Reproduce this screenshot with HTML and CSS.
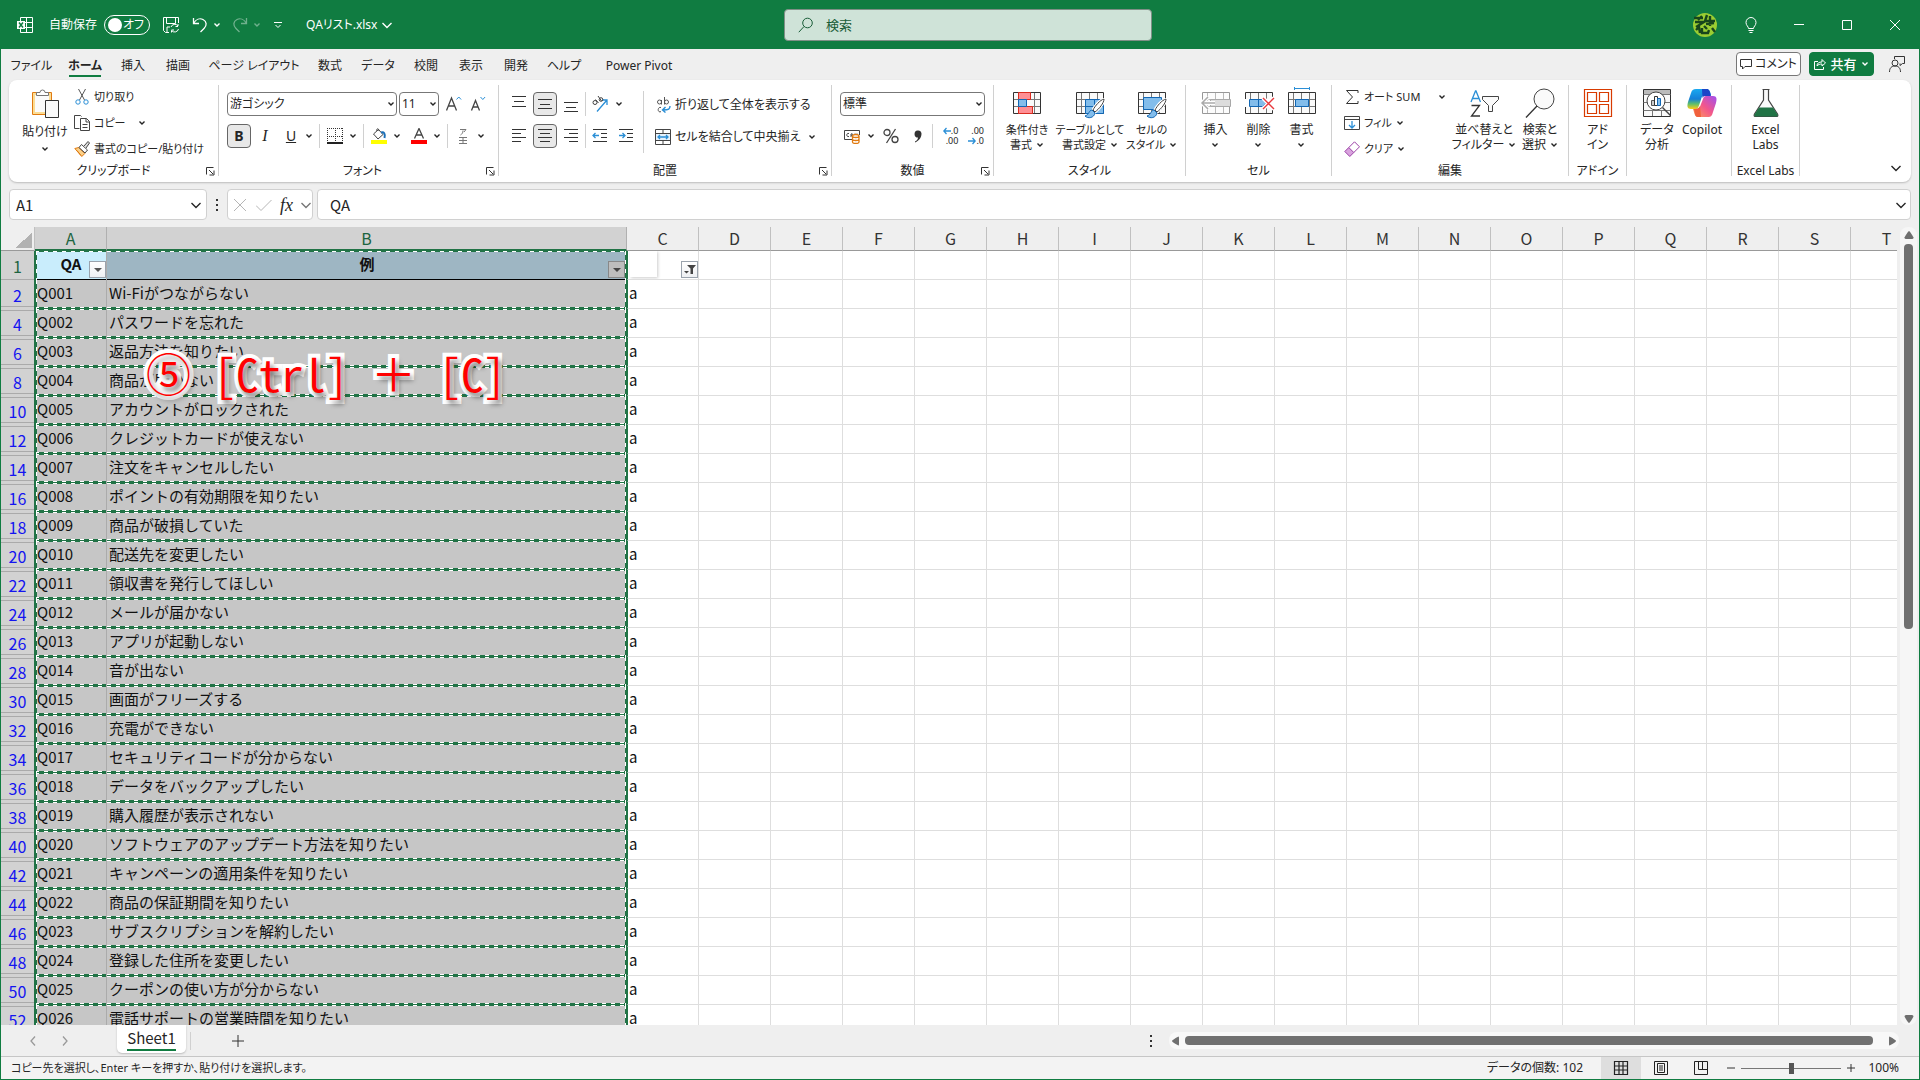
FILE: index.html
```html
<!DOCTYPE html>
<html lang="ja">
<head>
<meta charset="utf-8">
<title>QAリスト.xlsx - Excel</title>
<link rel="stylesheet" href="styles.css">
</head>
<body>
<svg class="defs" aria-hidden="true">
  <symbol id="chev" viewBox="0 0 8 8"><path d="M1.500 2.500 4 5l2.500-2.500" fill="none" stroke="currentColor" stroke-width="1.400"/></symbol>
  <symbol id="chev-lg" viewBox="0 0 12 12"><path d="M1.500 4 6 8.500 10.500 4" fill="none" stroke="currentColor" stroke-width="1.400"/></symbol>
  <symbol id="launch" viewBox="0 0 9 9"><path d="M.5 7.500V.5h7M3 3l4 4M8 3.500V8H3.500" fill="none" stroke="#333"/></symbol>
  <symbol id="table" viewBox="0 0 30 30"><path d="M1.500 4.500h27v21h-27z" fill="#fafafa"/><path d="M6.500 5v20M14.500 5v20M22.500 5v20M2 11.500h26M2 18.500h26" stroke="#777" fill="none"/><path d="M1.500 4.500h27v21h-27z" fill="none" stroke="#333"/></symbol>
  <symbol id="brush" viewBox="0 0 22 22"><path d="M20 1c-4 1-9 7-11 11l2 2c4-3 9-9 9-13z" fill="#fff" stroke="#fff" stroke-width="3"/><path d="M20 1c-4 1-9 7-11 11l2 2c4-3 9-9 9-13z" fill="#fff" stroke="#444"/><path d="M8 12c-3 0-3 5-7 6 3 3 9 2 10-3z" fill="#83bdeb" stroke="#1267b4"/></symbol>
</svg>
<div class="window">
<header class="titlebar">
  <div class="title-left">
    <svg class="i16" viewBox="0 0 16 16"><path d="M3.500 4V.5h12v15h-12V12M7 5.500h8.500M7 10.500h8.500M9.500.5v15" fill="none" stroke="#fff"/><path d="M0 4h8v8H0z" fill="#fff"/><path d="m2 5.500 4 5m0-5-4 5" stroke="#107c41" stroke-width="1.500"/></svg>
    <span class="autosave">自動保存</span>
    <button class="toggle" aria-label="自動保存"><i></i>オフ</button>
    <button class="tb save" aria-label="保存"><svg class="i16" viewBox="0 0 16 16" fill="none" stroke="#fff"><path d="M6 15.500H2.500l-2-2V.5h15V6M3.500.5v6h9v-6M4 15v-5h3M8 10a4 4 0 0 1 7-1v-2m0 2.500h-2.500M15.500 12a4 4 0 0 1-7 1.500v2m0-2.500H11"/></svg></button>
    <button class="tb" aria-label="元に戻す"><svg class="i16" viewBox="0 0 16 16" fill="none" stroke="#fff" stroke-width="1.300"><path d="M1.500 1v5.500H7M1.500 6.500C4 2 8 1 11 2.500c4 2 4 6 1 9L8.500 15"/></svg></button>
    <svg class="c8" aria-hidden="true"><use href="#chev"/></svg>
    <button class="tb dim" aria-label="やり直し"><svg class="i16" viewBox="0 0 16 16" fill="none" stroke="#fff" stroke-width="1.300"><path d="M14.500 1v5.500H9M14.500 6.500C12 2 8 1 5 2.500c-4 2-4 6-1 9L7.500 15"/></svg></button>
    <svg class="c8 dim" aria-hidden="true"><use href="#chev"/></svg>
    <button class="tb custom" aria-label="クイック アクセス"><svg class="c8" viewBox="0 0 8 8" fill="none" stroke="#fff"><path d="M0 1.500h8M1.500 4 4 6.500 6.500 4"/></svg></button>
    <button class="filename">QAリスト.xlsx<svg class="c12"><use href="#chev-lg"/></svg></button>
  </div>
  <label class="search"><svg class="i16" viewBox="0 0 16 16" fill="none" stroke="#185c37"><circle cx="9.500" cy="6" r="4.800"/><path d="M6 9.500.8 15.200"/></svg><input type="text" placeholder="検索"></label>
  <div class="title-right">
    <svg class="avatar" viewBox="0 0 24 24"><circle cx="12" cy="12" r="12" fill="#9acd32"/><path d="M1 5h9M2 9h9l-8 5M9 3l-4 4M14 2l-2 6h10M13 11l8-1M17 3v10M3 17l3-3 1 6M9 15v5h6l1-3M19 15l3 4M11 13l3 3" fill="none" stroke="#17451c" stroke-width="2.400"/></svg>
    <button class="wb" aria-label="ヒント"><svg class="i16" viewBox="0 0 16 16" fill="none" stroke="#fff"><path d="M5.500 11.500c0-2-2.500-3-2.500-6a5 5 0 0 1 10 0c0 3-2.500 4-2.500 6zM5.500 13.500h5M6.500 15.500h3"/></svg></button>
    <button class="wb" aria-label="最小化"><svg class="i16" viewBox="0 0 16 16"><path d="M3 7.500h10" stroke="#fff"/></svg></button>
    <button class="wb" aria-label="最大化"><svg class="i16" viewBox="0 0 16 16"><path d="M3.500 3.500h9v9h-9z" fill="none" stroke="#fff"/></svg></button>
    <button class="wb" aria-label="閉じる"><svg class="i16" viewBox="0 0 16 16"><path d="m3 3 10 10m0-10L3 13" stroke="#fff"/></svg></button>
  </div>
</header>

<div class="tabbar">
  <nav class="tabs">
    <a href="#">ファイル</a><a href="#" class="on">ホーム</a><a href="#">挿入</a><a href="#">描画</a><a href="#">ページ レイアウト</a><a href="#">数式</a><a href="#">データ</a><a href="#">校閲</a><a href="#">表示</a><a href="#">開発</a><a href="#">ヘルプ</a><a href="#">Power Pivot</a>
  </nav>
  <div class="tab-actions">
    <button class="comment"><svg class="c12" viewBox="0 0 12 12"><path d="M.5 1.500h11v7H5L2.500 11V8.500h-2z" fill="none" stroke="#333"/></svg>コメント</button>
    <button class="share"><svg class="c12" viewBox="0 0 12 12" fill="none" stroke="#fff"><path d="M4 3.500H.5v8h9V9M3 8c0-3 2-4 5-4V1.500L11.500 5 8 8V6C6 6 4 6.500 3 8z"/></svg>共有<svg class="c8"><use href="#chev"/></svg></button>
    <button class="catchup" aria-label="更新"><svg class="i16" viewBox="0 0 16 16" fill="none" stroke="#333"><path d="M5.500 3V.5h10v7h-2l-2.500 2V7.500"/><circle cx="6" cy="7" r="3"/><path d="M.5 16c0-4 2-6 5.500-6s5.500 2 5.500 6"/></svg></button>
  </div>
</div>

<section class="ribbon">
  <div class="group g-clip">
    <div class="body">
      <button class="big paste"><svg class="i30" viewBox="0 0 30 30"><path d="M2.500 4.500h19v22h-19z" fill="#fff" stroke="#e07a10"/><path d="M4 6h16v19H4z" fill="#fbfbfb" stroke="#fbdc94" stroke-width="2"/><path d="M6.500 7.500v-3h3.500a2.500 2.500 0 0 1 5 0h3.500v3z" fill="#fff" stroke="#777"/><path d="M15.500 12.500h13v17h-13z" fill="#fafafa" stroke="#333"/></svg><span>貼り付け</span><svg class="c8"><use href="#chev"/></svg></button>
      <div class="list">
        <button><svg class="i16" viewBox="0 0 16 16" fill="none"><path d="m4.500 0 6 11M11.500 0l-6 11" stroke="#555"/><circle cx="4" cy="13" r="2.200" stroke="#2b8fd6"/><circle cx="12" cy="13" r="2.200" stroke="#2b8fd6"/></svg>切り取り</button>
        <button><svg class="i16" viewBox="0 0 16 16" fill="none" stroke="#444"><path d="M5.500 13.500h-5V.5h6l1 1"/><path d="M6.500 3.500h6l3 3v9h-9zM12 3.500V7h3.500M8.500 9.500h5M8.500 12.500h5"/></svg>コピー<svg class="c8 push"><use href="#chev"/></svg></button>
        <button><svg class="i16" viewBox="0 0 16 16"><path d="m.8 7.500 4-1 6 6-3 3z" fill="#fbd18a" stroke="#e07a10"/><path d="m5 6.500 2.500-3 6 5.500-2.500 3z" fill="#fff" stroke="#444"/><path d="m10 5 4-4.500L15.500 2 12 7" fill="#ddd" stroke="#444"/><path d="m3 9.500 4 5" stroke="#e07a10"/></svg>書式のコピー/貼り付け</button>
      </div>
    </div>
    <footer>クリップボード<button aria-label="詳細"><svg class="c9"><use href="#launch"/></svg></button></footer>
  </div>

  <div class="group g-font">
    <div class="body stack">
      <div class="row">
        <span class="combo wide"><select aria-label="フォント"><option>游ゴシック</option></select><svg class="c8"><use href="#chev"/></svg></span>
        <span class="combo"><select aria-label="サイズ"><option>11</option></select><svg class="c8"><use href="#chev"/></svg></span>
        <button class="t" aria-label="拡大"><svg class="i16" viewBox="0 0 16 16" fill="none"><path d="M.5 14.500 5.500 2l5 12.500M2.500 10h6.500" stroke="#444" stroke-width="1.300"/><path d="m10.500 3.500 2.300-2.500 2.300 2.500" stroke="#2b8fd6"/></svg></button>
        <button class="t" aria-label="縮小"><svg class="i16" viewBox="0 0 16 16" fill="none"><path d="m1.500 14.500 4-10 4 10M3 11h5" stroke="#444" stroke-width="1.300"/><path d="m10.500 1 2.300 2.500L15.100 1" stroke="#2b8fd6"/></svg></button>
      </div>
      <div class="row">
        <button class="t on bold">B</button><button class="t ital">I</button><button class="t under">U</button><button class="d" aria-label="下線"><svg class="c8"><use href="#chev"/></svg></button>
        <i class="sep"></i>
        <button class="t" aria-label="罫線"><svg class="i16" viewBox="0 0 16 16"><path d="M0 .5h16M.5 0v15M15.500 0v15M8.500 0v15M0 8.500h16" stroke="#333" stroke-dasharray="1 1"/><path d="M0 15h16" stroke="#222" stroke-width="2"/></svg></button><button class="d" aria-label="罫線の種類"><svg class="c8"><use href="#chev"/></svg></button>
        <i class="sep"></i>
        <button class="t" aria-label="塗りつぶし"><svg class="i16" viewBox="0 0 16 16"><path d="m2.500 6 5-4.500 4.500 5-5 4.500z" fill="#fff" stroke="#444"/><path d="M6 3c-1-3 2-3 2 0" fill="none" stroke="#444"/><path d="M10 4.500c3-1 4.500 1 3.500 5.500" fill="none" stroke="#1b6fb8" stroke-width="2"/><path d="M0 12h16v4H0z" fill="#ff0"/></svg></button><button class="d" aria-label="色"><svg class="c8"><use href="#chev"/></svg></button>
        <button class="t gap" aria-label="文字色"><svg class="i16" viewBox="0 0 16 16"><path d="m3.500 10.500 4.500-10 4.500 10M5 7h6" fill="none" stroke="#444" stroke-width="1.300"/><path d="M0 12h16v4H0z" fill="red"/></svg></button><button class="d" aria-label="文字色の選択"><svg class="c8"><use href="#chev"/></svg></button>
        <i class="sep"></i>
        <button class="t" aria-label="ふりがな"><svg class="i16" viewBox="0 0 16 16" fill="none" stroke="#777"><path d="M5 1.500h6L9 4M8 2.500C8 5 7 6 5.500 7M4 9.500h8M4 12.500h8M4 15.500h8M8 9v6"/></svg></button><button class="d" aria-label="ふりがなの設定"><svg class="c8"><use href="#chev"/></svg></button>
      </div>
    </div>
    <footer>フォント<button aria-label="詳細"><svg class="c9"><use href="#launch"/></svg></button></footer>
  </div>

  <div class="group g-align">
    <div class="body">
      <div class="stack">
        <div class="row r26">
          <button class="t" aria-label="上揃え"><svg class="i16" viewBox="0 0 16 16"><path d="M1 .5h14M3 5.500h10M1 10.500h14" stroke="#333"/></svg></button>
          <button class="t on" aria-label="上下中央"><svg class="i16" viewBox="0 0 16 16"><path d="M1 3.500h14M3 8.500h10M1 12.500h14" stroke="#333"/></svg></button>
          <button class="t" aria-label="下揃え"><svg class="i16" viewBox="0 0 16 16"><path d="M1 6.500h14M3 11.500h10M1 15.500h14" stroke="#333"/></svg></button>
          <i class="sep"></i>
          <button class="t" aria-label="方向"><svg class="i16" viewBox="0 0 16 16"><path d="M5 15.500 15 4M10 4h5v5" fill="none" stroke="#2b8fd6" stroke-width="1.300"/><g fill="none" stroke="#444"><circle cx="3" cy="6.500" r="2"/><path d="m3.500 3.500 3 3.500M6 0l3.500 5"/><circle cx="9" cy="3.500" r="1.800"/></g></svg></button><button class="d" aria-label="方向の選択"><svg class="c8"><use href="#chev"/></svg></button>
        </div>
        <div class="row r26">
          <button class="t" aria-label="左揃え"><svg class="i16" viewBox="0 0 16 16"><path d="M1 1.500h14M1 5.500h9M1 9.500h14M1 13.500h9" stroke="#333"/></svg></button>
          <button class="t on" aria-label="中央揃え"><svg class="i16" viewBox="0 0 16 16"><path d="M1 1.500h14M3 5.500h10M1 9.500h14M3 13.500h10" stroke="#333"/></svg></button>
          <button class="t" aria-label="右揃え"><svg class="i16" viewBox="0 0 16 16"><path d="M1 1.500h14M6 5.500h9M1 9.500h14M6 13.500h9" stroke="#333"/></svg></button>
          <i class="sep"></i>
          <button class="t" aria-label="インデント減"><svg class="i16" viewBox="0 0 16 16" fill="none"><path d="M1 1.500h14M9 5.500h6M9 9.500h6M1 13.500h14" stroke="#333"/><path d="M7 7.500H1M3.500 5 1 7.500 3.500 10" stroke="#2b8fd6" stroke-width="1.300"/></svg></button>
          <button class="t" aria-label="インデント増"><svg class="i16" viewBox="0 0 16 16" fill="none"><path d="M1 1.500h14M9 5.500h6M9 9.500h6M1 13.500h14" stroke="#333"/><path d="M1 7.500h6M4.500 5 7 7.500 4.500 10" stroke="#2b8fd6" stroke-width="1.300"/></svg></button>
        </div>
      </div>
      <i class="rule"></i>
      <div class="stack wraps">
        <button><svg class="i16" viewBox="0 0 16 16" fill="none"><g stroke="#555"><circle cx="4.500" cy="5" r="2"/><path d="M6.500 3v4.500M9.500 0v7.500"/><circle cx="11.500" cy="5" r="2"/><path d="M6 10.500c-3-1-4 4-1 4.500l1-.5"/></g><path d="M15 9c0 3-1 4-7 4M10.500 10 7.500 13l3 2.500" stroke="#2b8fd6" stroke-width="1.400"/></svg>折り返して全体を表示する</button>
        <button><svg class="i16" viewBox="0 0 16 16" fill="none"><path d="M1 4.500h14v7H1z" fill="#e6f2fc"/><path d="M.5.5h15v15H.5zM.5 4.500h15M.5 11.500h15M8 .5v4M8 11.500v4" stroke="#444"/><path d="M3 8h10M5 6 3 8l2 2M11 6l2 2-2 2" stroke="#2b8fd6" stroke-width="1.300"/></svg>セルを結合して中央揃え<svg class="c8 push"><use href="#chev"/></svg></button>
      </div>
    </div>
    <footer>配置<button aria-label="詳細"><svg class="c9"><use href="#launch"/></svg></button></footer>
  </div>

  <div class="group g-num">
    <div class="body stack">
      <div class="row"><span class="combo fill"><select aria-label="表示形式"><option>標準</option></select><svg class="c8"><use href="#chev"/></svg></span></div>
      <div class="row r26">
        <button class="t money" aria-label="通貨"><svg class="i16" viewBox="0 0 16 16" fill="none"><path d="M8 11.500H.5v-9h15V7" stroke="#444"/><path d="M5 5.500c-3-1-3 4 0 3M7 9V6c2-1 2 1 0 1.500M11 5.500v3M13 5.500v2" stroke="#444"/><path d="M8.500 8v6c0 2 6.500 2 6.500 0V8c0-2-6.500-2-6.500 0 0 2 6.500 2 6.500 0M8.500 11c0 2 6.500 2 6.500 0" fill="#fff" stroke="#e07a10" stroke-width="1.300"/></svg></button><button class="d" aria-label="通貨の選択"><svg class="c8"><use href="#chev"/></svg></button>
        <button class="t pct" aria-label="パーセント"><svg class="i16" viewBox="0 0 16 16" fill="none" stroke="#444" stroke-width="1.300"><circle cx="4" cy="4.500" r="3"/><circle cx="12" cy="11.500" r="3"/><path d="M12.500 1 3.500 15"/></svg></button>
        <button class="t" aria-label="桁区切り"><svg class="i16" viewBox="0 0 16 16"><path d="M11.500 5.500c0 4-2 7-6.500 9v-1c2-1 3-2.500 3-4A3.500 3.500 0 1 1 11.500 5.500z" fill="#333"/></svg></button>
        <i class="sep"></i>
        <button class="t dec"><span><svg class="c8" viewBox="0 0 8 8"><path d="M8 4H1m2.500-3L.8 4l2.700 3" fill="none" stroke="#2b8fd6" stroke-width="1.300"/></svg>.0</span><span>.00</span></button>
        <button class="t dec"><span>.00</span><span><svg class="c8" viewBox="0 0 8 8"><path d="M0 4h7M4.500 1l2.700 3-2.700 3" fill="none" stroke="#2b8fd6" stroke-width="1.300"/></svg>.0</span></button>
      </div>
    </div>
    <footer>数値<button aria-label="詳細"><svg class="c9"><use href="#launch"/></svg></button></footer>
  </div>

  <div class="group g-style">
    <div class="body">
      <button class="big"><svg class="i30" viewBox="0 0 30 30"><use href="#table"/><path d="M6.500 4.500h12v7h-12zM6.500 18.500h14v7h-14z" fill="#ff8f94" stroke="#d92c20"/><path d="M6.500 11.500h8v7h-8z" fill="#83bdeb" stroke="#1267b4"/></svg><span>条件付き<br>書式<svg class="c8"><use href="#chev"/></svg></span></button>
      <button class="big"><svg class="i30" viewBox="0 0 30 30"><use href="#table"/><path d="M10.500 11.500h18v14h-18z" fill="#83bdeb" stroke="#1267b4"/><path d="M19.500 11.500v14M10.500 18.500h18" stroke="#1267b4"/><use href="#brush" x="9" y="10" width="22" height="22"/></svg><span>テーブルとして<br>書式設定<svg class="c8"><use href="#chev"/></svg></span></button>
      <button class="big"><svg class="i30" viewBox="0 0 30 30"><use href="#table"/><path d="M6.500 9.500h18v12h-18z" fill="#83bdeb" stroke="#1267b4"/><use href="#brush" x="9" y="10" width="22" height="22"/></svg><span>セルの<br>スタイル<svg class="c8"><use href="#chev"/></svg></span></button>
    </div>
    <footer>スタイル</footer>
  </div>

  <div class="group g-cell">
    <div class="body">
      <button class="big"><svg class="i30" viewBox="0 0 30 30"><g opacity=".5"><use href="#table"/><path d="M9.500 11.500h20v7h-20z" fill="#bbb" stroke="#555"/></g><path d="M14 15H1M7 9l-6 6 6 6" fill="none" stroke="#fff" stroke-width="4"/><path d="M14 15H1M7 9l-6 6 6 6" fill="none" stroke="#aaa" stroke-width="1.500"/></svg><span>挿入<br><svg class="c8"><use href="#chev"/></svg></span></button>
      <button class="big"><svg class="i30" viewBox="0 0 30 30"><use href="#table"/><path d="M0 11h30v8H0z" fill="#fff"/><path d="M5.500 11.500h13l4 3.500-4 3.500h-13z" fill="#83bdeb" stroke="#1267b4"/><path d="M14.500 11.500v7" stroke="#1267b4"/><path d="m19 10 11 11m0-11L19 21" stroke="#fff" stroke-width="4"/><path d="m19 10 11 11m0-11L19 21" stroke="#e8383d" stroke-width="1.400"/></svg><span>削除<br><svg class="c8"><use href="#chev"/></svg></span></button>
      <button class="big"><svg class="i30" viewBox="0 0 30 30"><use href="#table"/><path d="M8.500 11.500h13v7h-13z" fill="#83bdeb" stroke="#1267b4"/><path d="M7.500-1v3M22.500-1v3M7.500.5h15" stroke="#2b8fd6"/></svg><span>書式<br><svg class="c8"><use href="#chev"/></svg></span></button>
    </div>
    <footer>セル</footer>
  </div>

  <div class="group g-edit">
    <div class="body">
      <div class="list">
        <button><svg class="i16" viewBox="0 0 16 16" fill="none" stroke="#333"><path d="M14 4V1.500H2.500L8.500 8l-6 6.500H14V12"/></svg>オート SUM<svg class="c8 push"><use href="#chev"/></svg></button>
        <button><svg class="i16" viewBox="0 0 16 16" fill="none"><path d="M.5 1.500h15v13H.5zM.5 4.500h15" stroke="#444"/><path d="M8 6v6.500M5 10l3 3 3-3" stroke="#2b8fd6" stroke-width="1.300"/></svg>フィル<svg class="c8"><use href="#chev"/></svg></button>
        <button><svg class="i16" viewBox="0 0 16 16" fill="none" stroke="#9b3fa5"><path d="m.8 10.500 4-4 5 5-4 4z" fill="#d9a3de"/><path d="m4.800 6.500 5.700-5.700 5 5-5.700 5.700"/></svg>クリア<svg class="c8"><use href="#chev"/></svg></button>
      </div>
      <button class="big"><svg class="i30" viewBox="0 0 30 30" fill="none"><path d="m2 14 4.500-11h.5l4.500 11M3.500 10.500h6.500" stroke="#2b8fd6" stroke-width="1.300"/><path d="M2.500 17.500h8l-8 10.500h8.500" stroke="#333" stroke-width="1.300"/><path d="M13.500 8.500h16v3l-6 6v6h-4v-6l-6-6z" fill="#fafafa" stroke="#444"/></svg><span>並べ替えと<br>フィルター<svg class="c8"><use href="#chev"/></svg></span></button>
      <button class="big"><svg class="i30" viewBox="0 0 30 30"><circle cx="19" cy="11" r="10" fill="#fafafa" stroke="#444"/><path d="M12 18 1 29.500" stroke="#333" stroke-width="1.300"/></svg><span>検索と<br>選択<svg class="c8"><use href="#chev"/></svg></span></button>
    </div>
    <footer>編集</footer>
  </div>

  <div class="group g-addin">
    <div class="body"><button class="big"><svg class="i30" viewBox="0 0 30 30" fill="none" stroke="#d83b01"><path d="M1.500 1.500h27v27h-27zM4.500 4.500h9v9h-9zM16.500 4.500h9v9h-9zM4.500 16.500h9v9h-9zM16.500 16.500h9v9h-9z" stroke-width="1.200"/></svg><span>アド<br>イン</span></button></div>
    <footer>アドイン</footer>
  </div>

  <div class="group g-ai">
    <div class="body">
      <button class="big"><svg class="i30" viewBox="0 0 30 30"><path d="M1.500 1.500h27v27h-27z" fill="#fafafa" stroke="#333"/><path d="M2 2h26v4H2z" fill="#bbb"/><path d="M1.500 6.500h27M1.500 14.500h27M1.500 22.500h27M10.500 22v6M19.500 22v6" stroke="#777"/><circle cx="14" cy="13" r="9" fill="#fff" stroke="#444"/><path d="m20.500 19.500 8 8" stroke="#444" stroke-width="1.500"/><path d="M9.500 12.500h3v5h-3z" fill="#ccc" stroke="#555"/><path d="M12.500 8.500h3v9h-3z" fill="#fff" stroke="#333"/><path d="M15.500 10.500h3v7h-3z" fill="#83bdeb" stroke="#1267b4"/></svg><span>データ<br>分析</span></button>
      <button class="big"><svg class="i30" viewBox="0 0 30 30"><defs><linearGradient id="ca" x1="0" y1="0" x2="0" y2="1"><stop offset="0" stop-color="#1aa9f0"/><stop offset=".5" stop-color="#1580d8"/><stop offset=".75" stop-color="#5fbf6a"/><stop offset="1" stop-color="#ffcc14"/></linearGradient><linearGradient id="cb" x1="1" y1="0" x2="0" y2="1"><stop offset="0" stop-color="#a04ff0"/><stop offset=".5" stop-color="#f2568c"/><stop offset="1" stop-color="#ffa055"/></linearGradient></defs><path d="M9 1h11c2 0 3 2 4 6l-5-.5c-3 0-4 1.500-5 5l-2 6c-1 3-2 3.500-4 3.500H4c-4 0-4-3-3-7L4 5c1-3 2-4 5-4z" fill="url(#ca)"/><path d="M15 1h5c2 0 3 2 4 7h-5c-1.500 0-2.500 0-3.500 2z" fill="#1b45c8"/><path d="M21 29H11c-3 0-3-2-5-8h3c3 0 4-2 5-5l2-5c1-3 2-3 4-3h6c4 0 4 3 3 7l-3 9c-1 4-2 5-5 5z" fill="url(#cb)"/><path d="M14 29h-3c-3 0-3-3-4-8 4 0 5-1 6-3z" fill="#f0603c"/></svg><span>Copilot</span></button>
    </div>
  </div>

  <div class="group g-labs">
    <div class="body"><button class="big"><svg class="i30" viewBox="0 0 30 30"><path d="M11.500 1.500h7M12.500 1.500V12L3.500 26c-1 2 0 2.500 1.500 2.500h20c1.500 0 2.500-.5 1.500-2.500l-9-14V1.500" fill="#fafafa" stroke="#444" stroke-width="1.200"/><path d="M8 19.500h14l4.500 7c.5 1.500 0 2-1.500 2H5c-1.500 0-2-.5-1.500-2z" fill="#217346"/></svg><span>Excel<br>Labs</span></button></div>
    <footer>Excel Labs</footer>
  </div>
  <button class="collapse" aria-label="リボンを折りたたむ"><svg class="c12"><use href="#chev-lg"/></svg></button>
</section>

<section class="formula">
  <label class="box name"><input type="text" value="A1" aria-label="名前ボックス"><svg class="c12"><use href="#chev-lg"/></svg></label>
  <svg class="dots" viewBox="0 0 4 12"><path d="M1 0h2v2H1zM1 5h2v2H1zM1 10h2v2H1z" fill="#333"/></svg>
  <div class="box fx">
    <button aria-label="キャンセル"><svg class="i16" viewBox="0 0 16 16"><path d="m2 2 12 12m0-12L2 14" stroke="#b5b5b5"/></svg></button>
    <button aria-label="入力"><svg class="i16" viewBox="0 0 16 16"><path d="m0 8.500 5 5L15.500 3" fill="none" stroke="#b5b5b5"/></svg></button>
    <button class="fn">fx</button>
    <svg class="c12 grey"><use href="#chev-lg"/></svg>
  </div>
  <label class="box bar"><input type="text" value="QA" aria-label="数式バー"><svg class="c12"><use href="#chev-lg"/></svg></label>
</section>

<main class="sheet">
  <div class="grid">
    <table>
      <colgroup><col class="c-head"><col class="c-std"><col class="c-b"><col class="c-std" span="18"></colgroup>
      <thead><tr><th class="corner"></th><th class="sel">A</th><th class="sel">B</th><th>C</th><th>D</th><th>E</th><th>F</th><th>G</th><th>H</th><th>I</th><th>J</th><th>K</th><th>L</th><th>M</th><th>N</th><th>O</th><th>P</th><th>Q</th><th>R</th><th>S</th><th>T</th></tr></thead>
      <tbody>
        <tr class="first"><th>1</th><td class="qa">QA<button class="filter" aria-label="フィルター"><svg class="c8" viewBox="0 0 8 8"><path d="M0 2h8L4 6z" fill="#555"/></svg></button></td><td class="ex">例<button class="filter shade" aria-label="フィルター"><svg class="c8" viewBox="0 0 8 8"><path d="M0 2h8L4 6z" fill="#444"/></svg></button></td><td class="flag"><i class="smart"></i><button class="filter" aria-label="フィルター適用中"><svg class="c12" viewBox="0 0 12 12"><path d="M3 1h9L9 4.500V10H6.500V4.500zM0 7h5L2.500 9.500z" fill="#444"/></svg></button></td><td class="rest" colspan="17"></td></tr>
        <tr><th>2</th><td>Q001</td><td>Wi-Fiがつながらない</td><td>a</td><td class="rest" colspan="17"></td></tr>
        <tr><th>4</th><td>Q002</td><td>パスワードを忘れた</td><td>a</td><td class="rest" colspan="17"></td></tr>
        <tr><th>6</th><td>Q003</td><td>返品方法を知りたい</td><td>a</td><td class="rest" colspan="17"></td></tr>
        <tr><th>8</th><td>Q004</td><td>商品が届かない</td><td>a</td><td class="rest" colspan="17"></td></tr>
        <tr><th>10</th><td>Q005</td><td>アカウントがロックされた</td><td>a</td><td class="rest" colspan="17"></td></tr>
        <tr><th>12</th><td>Q006</td><td>クレジットカードが使えない</td><td>a</td><td class="rest" colspan="17"></td></tr>
        <tr><th>14</th><td>Q007</td><td>注文をキャンセルしたい</td><td>a</td><td class="rest" colspan="17"></td></tr>
        <tr><th>16</th><td>Q008</td><td>ポイントの有効期限を知りたい</td><td>a</td><td class="rest" colspan="17"></td></tr>
        <tr><th>18</th><td>Q009</td><td>商品が破損していた</td><td>a</td><td class="rest" colspan="17"></td></tr>
        <tr><th>20</th><td>Q010</td><td>配送先を変更したい</td><td>a</td><td class="rest" colspan="17"></td></tr>
        <tr><th>22</th><td>Q011</td><td>領収書を発行してほしい</td><td>a</td><td class="rest" colspan="17"></td></tr>
        <tr><th>24</th><td>Q012</td><td>メールが届かない</td><td>a</td><td class="rest" colspan="17"></td></tr>
        <tr><th>26</th><td>Q013</td><td>アプリが起動しない</td><td>a</td><td class="rest" colspan="17"></td></tr>
        <tr><th>28</th><td>Q014</td><td>音が出ない</td><td>a</td><td class="rest" colspan="17"></td></tr>
        <tr><th>30</th><td>Q015</td><td>画面がフリーズする</td><td>a</td><td class="rest" colspan="17"></td></tr>
        <tr><th>32</th><td>Q016</td><td>充電ができない</td><td>a</td><td class="rest" colspan="17"></td></tr>
        <tr><th>34</th><td>Q017</td><td>セキュリティコードが分からない</td><td>a</td><td class="rest" colspan="17"></td></tr>
        <tr><th>36</th><td>Q018</td><td>データをバックアップしたい</td><td>a</td><td class="rest" colspan="17"></td></tr>
        <tr><th>38</th><td>Q019</td><td>購入履歴が表示されない</td><td>a</td><td class="rest" colspan="17"></td></tr>
        <tr><th>40</th><td>Q020</td><td>ソフトウェアのアップデート方法を知りたい</td><td>a</td><td class="rest" colspan="17"></td></tr>
        <tr><th>42</th><td>Q021</td><td>キャンペーンの適用条件を知りたい</td><td>a</td><td class="rest" colspan="17"></td></tr>
        <tr><th>44</th><td>Q022</td><td>商品の保証期間を知りたい</td><td>a</td><td class="rest" colspan="17"></td></tr>
        <tr><th>46</th><td>Q023</td><td>サブスクリプションを解約したい</td><td>a</td><td class="rest" colspan="17"></td></tr>
        <tr><th>48</th><td>Q024</td><td>登録した住所を変更したい</td><td>a</td><td class="rest" colspan="17"></td></tr>
        <tr><th>50</th><td>Q025</td><td>クーポンの使い方が分からない</td><td>a</td><td class="rest" colspan="17"></td></tr>
        <tr><th>52</th><td>Q026</td><td>電話サポートの営業時間を知りたい</td><td>a</td><td class="rest" colspan="17"></td></tr>
      </tbody>
    </table>
    <p class="callout">⑤ [Ctrl] ＋ [C]</p>
  </div>
  <div class="vscroll"><svg class="c12" viewBox="0 0 12 12"><path d="M6 2q1 0 4.500 6.500 0 1.500-1.500 1.500H3q-1.500 0-1.500-1.500Q5 2 6 2z" fill="#6f6f6f"/></svg><i></i><svg class="c12 down" viewBox="0 0 12 12"><path d="M6 10q1 0 4.500-6.500Q10.500 2 9 2H3Q1.500 2 1.500 3.500 5 10 6 10z" fill="#6f6f6f"/></svg></div>
</main>

<div class="sheetbar">
  <button class="nav" aria-label="前のシート"><svg class="c12" viewBox="0 0 12 12"><path d="M8 1.500 4 6l4 4.500" fill="none" stroke="#999" stroke-width="1.300"/></svg></button>
  <button class="nav" aria-label="次のシート"><svg class="c12" viewBox="0 0 12 12"><path d="M4 1.500 8 6l-4 4.500" fill="none" stroke="#999" stroke-width="1.300"/></svg></button>
  <button class="stab"><span>Sheet1</span></button>
  <i class="sep"></i>
  <button class="add" aria-label="新しいシート"><svg class="c12" viewBox="0 0 12 12"><path d="M6 0v12M0 6h12" stroke="#333"/></svg></button>
  <svg class="dots end" viewBox="0 0 4 12"><path d="M1 0h2v2H1zM1 5h2v2H1zM1 10h2v2H1z" fill="#333"/></svg>
  <div class="hscroll"><svg class="c12" viewBox="0 0 12 12"><path d="M2 6q0-1 6.500-4.500Q9 1.500 9 3v6q0 1.500-.5 1.500Q2 7 2 6z" fill="#6f6f6f"/></svg><i></i><svg class="c12" viewBox="0 0 12 12"><path d="M10 6q0-1-6.500-4.500Q3 1.500 3 3v6q0 1.500.5 1.500Q10 7 10 6z" fill="#6f6f6f"/></svg></div>
</div>

<footer class="status">
  <span>コピー先を選択し、Enter キーを押すか、貼り付けを選択します。</span>
  <span class="count">データの個数: 102</span>
  <button class="view on" aria-label="標準"><svg class="i16" viewBox="0 0 16 16"><path d="M1.500 1.500h13v13h-13zM6 1.500v13M10 1.500v13M1.500 6h13M1.500 10h13" fill="none" stroke="#222" stroke-width="1.200"/></svg></button>
  <button class="view" aria-label="ページ レイアウト"><svg class="i16" viewBox="0 0 16 16"><path d="M1.500 1.500h13v13h-13zM4.500 3.500h7v9h-7zM6 6h4M6 8h4M6 10h4" fill="none" stroke="#222"/></svg></button>
  <button class="view" aria-label="改ページ プレビュー"><svg class="i16" viewBox="0 0 16 16"><path d="M1.500 1.500h13v13h-13zM5.500 1.500v8h9M9.500 1.500v8" fill="none" stroke="#222"/></svg></button>
  <button class="zoom" aria-label="縮小"><svg class="c8" viewBox="0 0 8 8"><path d="M0 4h8" stroke="#333"/></svg></button>
  <input type="range" min="0" max="100" value="50" aria-label="ズーム">
  <button class="zoom" aria-label="拡大"><svg class="c8" viewBox="0 0 8 8"><path d="M0 4h8M4 0v8" stroke="#333"/></svg></button>
  <button class="pc">100%</button>
</footer>
</div>
</body>
</html>
```

FILE: styles.css
```css
* { box-sizing: border-box; }
:root {
  --green: #107c41;
  --line: #d0d0d0;
  --ant: #217346;
  --ui: "Noto Sans", "Noto Sans CJK JP", sans-serif;
  --cell: "Noto Sans CJK JP", "Noto Sans", sans-serif;
}
body {
  margin: 0;
  font: 12px/16px var(--ui);
  font-feature-settings: "palt";
  color: #252525;
  background: #efefef;
}
button, input, select { font: inherit; font-feature-settings: inherit; color: inherit; }
button { border: 0; padding: 0; background: none; white-space: nowrap; }
svg { flex: none; display: block; }
.defs { position: absolute; width: 0; height: 0; }
.i16 { width: 16px; height: 16px; }
.i30 { width: 30px; height: 30px; overflow: visible; }
.c8 { width: 8px; height: 8px; }
.c9 { width: 9px; height: 9px; }
.c12 { width: 12px; height: 12px; }
.dots { width: 4px; height: 12px; }
.grey { color: #777; }
.dim { opacity: .4; }

.window { display: flex; flex-direction: column; height: 100vh; border: 1px solid var(--green); border-top: 0; }

/* Title bar */
.titlebar {
  display: grid; grid-template-columns: 1fr 368px 1fr; align-items: center;
  height: 49px; flex: none; padding-left: 16px; background: var(--green); color: #fff;
}
.title-left, .title-right { display: flex; align-items: center; }
.title-right { justify-content: flex-end; }
.autosave { margin: 0 7px 0 16px; white-space: nowrap; }
.toggle { display: flex; align-items: center; justify-content: space-between; width: 46px; height: 20px; padding: 0 5px 0 3px; border: 1px solid #fff; border-radius: 10px; }
.toggle i { width: 14px; height: 14px; border-radius: 50%; background: #fff; }
.tb { width: 16px; margin-right: 5px; margin-left: 11px; }
.tb.save { margin: 0 2px 0 13px; }
.tb.custom { display: flex; margin: 0 24px 0 13px; width: 8px; }
.filename { display: flex; align-items: center; gap: 4px; }
.search { display: flex; align-items: center; gap: 12px; height: 32px; padding-left: 13px; border: 1px solid #7f8f86; border-radius: 4px; background: #cfe3d8; color: #185c37; }
.search input { flex: 1; min-width: 0; border: 0; padding: 0; background: none; font-size: 13px; }
.search input::placeholder { color: #185c37; }
.avatar { width: 24px; height: 24px; margin-right: 10px; }
.wb { display: grid; place-items: center; width: 48px; height: 48px; }

/* Ribbon tabs */
.tabbar { display: flex; justify-content: space-between; height: 31px; flex: none; padding: 0 14px 0 12px; }
.tabs {
  display: grid; column-gap: 19px; height: 28px;
  grid-template-columns: 37px 32px 26px 26px 88px 26px 32px 26px 26px 26px 32px 80px;
}
.tabs a { display: flex; justify-content: center; align-items: center; color: inherit; text-decoration: none; white-space: nowrap; padding-top: 6px; }
.tabs .on { padding-top: 8px; font-weight: 700; border-bottom: 2px solid var(--green); }
.tab-actions { display: flex; align-items: center; gap: 8px; margin-top: 3px; height: 24px; }
.comment, .share { display: flex; align-items: center; justify-content: center; gap: 3px; width: 65px; height: 24px; border: 1px solid #777; border-radius: 4px; background: #fff; }
.share { border-color: var(--green); background: var(--green); color: #fff; font-weight: 500; gap: 4px; font-size: 13px; }
.catchup { margin-left: 7px; }

/* Ribbon */
.ribbon { display: flex; flex: none; height: 102px; margin: 0 8px; padding: 5px 0 6px; background: #fff; border-radius: 8px; box-shadow: 0 1px 2px #bbb; }
.group { display: flex; flex-direction: column; flex: none; border-right: 1px solid var(--line); }
.group .body { display: flex; flex: 1; }
.group footer { display: flex; justify-content: center; position: relative; height: 16px; margin-bottom: -3px; white-space: nowrap; }
.group footer button { position: absolute; right: 3px; bottom: 3px; }
.g-clip { width: 210px; }
.g-font { width: 280px; padding-left: 8px; }
.g-align { width: 333px; }
.g-num { width: 162px; padding: 0 8px; }
.g-num footer button { right: -5px; }
.g-style { width: 192px; }
.g-cell { width: 146px; }
.g-edit { width: 237px; }
.g-addin { width: 58px; }
.g-ai { width: 105px; }
.g-labs { width: 68px; }
.big { display: flex; flex-direction: column; align-items: center; gap: 4px; padding-top: 3px; line-height: 15px; height: 78px; }
.big span svg { display: inline-block; margin-left: 4px; }
.g-cell .big span svg { margin-left: 0; }
.paste { width: 58px; margin-left: 7px; gap: 6px; }
.list { display: flex; flex-direction: column; width: 130px; margin-top: -1px; font-size: 11px; }
.list button, .wraps button { display: flex; align-items: center; gap: 4px; height: 26px; }
.g-clip .list .push { margin-left: 8px; }
.stack { display: flex; flex-direction: column; gap: 8px; }
.group .stack { flex-direction: column; padding-top: 7px; flex: none; }
.group > .stack { flex: 1; }
.row { display: flex; align-items: center; height: 24px; }
.t { display: grid; place-items: center; width: 24px; height: 24px; }
.r26 .t { margin: 0 1px; }
.d { display: grid; place-items: center; width: 12px; height: 24px; }
.on.t { background: #e8e8e8; border: 1px solid #666; border-radius: 4px; }
.bold { font-size: 14px; font-weight: 700; margin-right: 2px; }
.ital { font: italic 16px "Liberation Serif", serif; margin-right: 2px; }
.under { font-size: 14px; text-decoration: underline; }
.t.gap { margin-left: 4px; }
.sep { width: 1px; height: 24px; margin: 0 3px 0 4px; background: var(--line); }
.r26 .sep { margin: 0 1px; }
.combo { position: relative; width: 40px; height: 24px; margin-right: 3px; }
.combo.wide { width: 170px; margin-right: 2px; }
.combo.fill { width: 146px; margin: 0; }
.combo select { width: 100%; height: 24px; padding: 0 2px; appearance: none; border: 1px solid #777; border-radius: 4px; background: #fff; font-size: 12px; }
.combo svg { position: absolute; right: 2px; top: 8px; }
.g-align .stack:first-child { width: 144px; padding-left: 7px; }
.rule { width: 1px; height: 62px; margin-top: 6px; background: var(--line); }
.wraps { width: 180px; padding-left: 11px; }
.group .wraps { gap: 6px; }
.wraps .push { margin-left: 4px; }
.g-num .money { margin-left: 0; }
.g-num .pct { margin: 0 2px 0 3px; }
.dec { display: flex; flex-direction: column; align-items: flex-end; justify-content: center; font-size: 9px; line-height: 10px; }
.dec span { display: flex; align-items: center; height: 10px; }
.g-style .big { font-size: 11px; }
.g-style .big:nth-child(1) { width: 66px; }
.g-style .big:nth-child(2) { width: 60px; }
.g-style .big:nth-child(3) { width: 63px; }
.g-cell .body { padding-left: 8px; }
.g-cell .big { width: 43px; }
.g-edit .body { padding-left: 12px; }
.g-edit .list { width: 110px; }
.g-edit .list .push { margin-left: 14px; }
.g-edit .big { width: 60px; }
.g-edit .big:last-child { width: 52px; }
.g-addin .body { justify-content: center; }
.g-ai .big:first-child { width: 60px; }
.g-ai .big { width: 30px; }
.g-labs .body { justify-content: center; }
.collapse { margin: auto 9px 0 auto; height: 16px; }

/* Formula bar */
.formula { display: flex; align-items: center; flex: none; height: 45px; padding: 0 8px; }
.box { display: flex; align-items: center; height: 31px; border: 1px solid var(--line); border-radius: 4px; background: #fff; }
.box input { flex: 1; min-width: 0; border: 0; padding: 0; background: none; font: 15px/20px var(--cell); }
.name { width: 198px; padding: 0 4px 0 6px; }
.formula .dots { margin: 0 8px; }
.fx { width: 86px; padding: 0 0 0 4px; gap: 8px; }
.fn { font: italic 18px/20px "Liberation Serif", serif; margin-right: -4px; }
.fx .grey { margin-left: auto; }
.bar { flex: 1; margin-left: 4px; padding: 0 3px 0 12px; }

/* Sheet */
.sheet { display: flex; flex: 1; min-height: 0; }
.grid { position: relative; flex: 1; min-width: 0; overflow: hidden; background: #fff; }
.grid table { table-layout: fixed; width: 1922px; border-spacing: 0; font: 15px/20px var(--cell); font-feature-settings: normal; color: #111; }
.c-head { width: 34px; }
.c-std { width: 72px; }
.c-b { width: 520px; }
.grid th { font-size: 16px; font-weight: 400; padding: 0; overflow: hidden; }
.grid thead th { height: 24px; padding-bottom: 2px; background: #efefef; border-right: 1px solid #c0c0c0; border-bottom: 1px solid #999; color: #333; }
.grid thead .sel { padding-bottom: 1px; background: #d2d2d2; color: #1c6440; border-right-color: #b0b0b0; border-bottom: 2px solid var(--ant); }
.grid thead .corner { background: linear-gradient(135deg, transparent 50%, #b2b2b2 50%) 15px 5px / 16px 16px no-repeat #efefef; }
tbody th {
  height: 29px; color: #1414f0; border-right: 1px solid var(--ant);
  background: linear-gradient(#aaa, #aaa) 0 26px / 100% 1px no-repeat, linear-gradient(#aaa, #aaa) 0 1px / 100% 1px no-repeat, #d2d2d2;
}
tbody tr > th { padding-top: 4px; }
tbody .first th { color: #1c6440; background: linear-gradient(#aaa, #aaa) 0 28px / 100% 1px no-repeat, #d2d2d2; }
tbody .first + tr th { background: linear-gradient(#aaa, #aaa) 0 26px / 100% 1px no-repeat, #d2d2d2; }
.grid td { height: 29px; padding: 0 1px 2px; overflow: hidden; white-space: nowrap; border-right: 1px solid #dedede; border-bottom: 1px solid #dedede; }
.grid td:nth-child(2), .grid td:nth-child(3) {
  --h-top: repeating-linear-gradient(90deg, #fff 0 4px, var(--ant) 4px 9px) 0 0 / 100% 1px no-repeat;
  --h-mid: repeating-linear-gradient(90deg, #fff 0 4px, var(--ant) 4px 9px) 0 27px / 100% 1px no-repeat;
  --h-low: linear-gradient(var(--ant), var(--ant)) 0 28px / 100% 1px no-repeat;
  border: 0; padding: 0 2px 4px;
}
.grid td:nth-child(2) { --v: repeating-linear-gradient(#fff 0 4px, var(--ant) 4px 9px) 1px 0 / 1px 100% no-repeat, linear-gradient(var(--ant), var(--ant)) 0 0 / 1px 100% no-repeat, linear-gradient(#ababab, #ababab) 100% 0 / 1px 100% no-repeat; background: var(--v), var(--h-mid), var(--h-low), var(--h-top), #c6c6c6; }
.grid td:nth-child(3) { --v: repeating-linear-gradient(#fff 0 4px, var(--ant) 4px 9px) 518px 0 / 1px 100% no-repeat, linear-gradient(var(--ant), var(--ant)) 519px 0 / 1px 100% no-repeat; background: var(--v), var(--h-mid), var(--h-low), var(--h-top), #c6c6c6; }
.grid td:nth-child(4) { border-left: 1px solid var(--ant); }
.grid .first td:nth-child(2), .grid .first td:nth-child(3) { position: relative; text-align: center; font-weight: 700; }
.grid .first .qa { --fill: #c9edfc; }
.grid .first .ex { --fill: #9eb6c3; }
.grid .first td:nth-child(2), .grid .first td:nth-child(3) { background: var(--v), linear-gradient(#000, #000) 0 28px / 100% 1px no-repeat, var(--h-top), var(--fill); }
.grid .first .flag { position: relative; }
.grid .first + tr td:nth-child(2), .grid .first + tr td:nth-child(3) { background: var(--v), var(--h-mid), var(--h-low), #c6c6c6; }
.filter { position: absolute; right: 0; top: 10px; display: grid; place-items: center; width: 17px; height: 17px; border: 1px solid #9aa3ad; background: linear-gradient(#fff, #eef0f3); }
.qa .filter { right: 1px; }
.ex .filter { right: 2px; }
.filter.shade { background: #bdbdbd; border-color: #888; }
.smart { position: absolute; left: 2px; top: 0; width: 27px; height: 26px; background: #fff; box-shadow: 1px 1px 3px #ccc; }
.grid .rest { background: repeating-linear-gradient(90deg, transparent 0 71px, #dedede 71px 72px); border-right: 0; }
.callout {
  position: absolute; left: 145px; top: 116px; margin: 0;
  font: 500 45px/60px "Noto Sans Mono CJK JP", "Noto Sans CJK JP", monospace; font-feature-settings: normal; white-space: pre;
  color: red; -webkit-text-stroke: 8px #fff; paint-order: stroke fill;
  text-shadow: 3px 4px 5px rgba(0, 0, 0, .6);
}
.vscroll { display: flex; flex-direction: column; align-items: center; flex: none; width: 17px; margin: 0 2px 0 3px; padding: 2px 0 0; background: #f6f6f6; border-radius: 8px; }
.vscroll i { width: 9px; height: calc(48% + 3px); margin-top: 3px; border-radius: 4px; background: #707070; }
.vscroll .down { margin-top: auto; }

/* Sheet tabs */
.sheetbar { display: flex; align-items: center; flex: none; height: 31px; padding: 0 20px 0 26px; }
.nav { width: 12px; margin-right: 20px; }
.stab { align-self: flex-start; width: 69px; height: 28px; margin: 0 4px 0 26px; background: #fff; border-radius: 0 0 5px 5px; box-shadow: 0 1px 2px #bbb; font: 15px/22px var(--cell); font-feature-settings: normal; }
.stab span { display: inline-block; border-bottom: 2px solid var(--green); }
.sheetbar .sep { margin: 0 41px 0 0; height: 18px; }
.end { margin-left: auto; }
.hscroll { display: flex; align-items: center; width: 39%; height: 17px; margin-left: 16px; padding: 0 1px; border-radius: 8px; background: #f8f8f8; }
.hscroll i { flex: 1; height: 9px; margin: 0 13px 0 3px; border-radius: 4px; background: #707070; }

/* Status bar */
.status { display: flex; align-items: center; flex: none; height: 23px; padding: 0 20px 0 10px; border-top: 1px solid #c6c6c6; background: #f3f3f3; font-size: 11px; }
.count { margin-left: auto; padding-right: 18px; font-size: 12px; }
.view { display: grid; place-items: center; width: 40px; height: 22px; }
.view.on { background: #dedede; }
.zoom { display: grid; place-items: center; width: 20px; height: 22px; }
.status input { width: 100px; height: 22px; margin: 0; appearance: none; background: linear-gradient(#777, #777) 0 50% / 100% 1px no-repeat; }
.status input::-webkit-slider-thumb { appearance: none; width: 5px; height: 11px; background: #555; }
.pc { width: 38px; text-align: right; font-size: 12px; }
```
